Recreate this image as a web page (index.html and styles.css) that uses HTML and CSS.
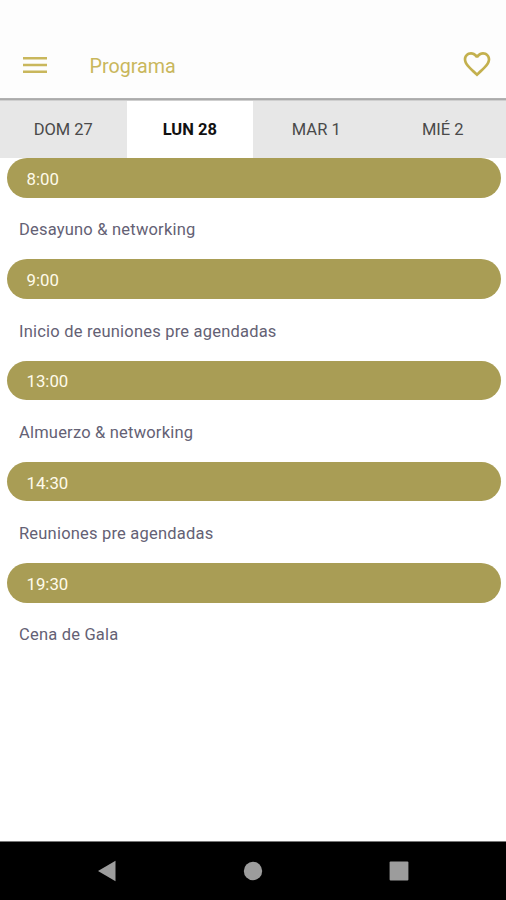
FILE: index.html
```html
<!DOCTYPE html>
<html lang="es">
<head>
    <meta charset="UTF-8">
    <meta name="viewport" content="width=device-width, initial-scale=1.0">
    <title>Programa</title>
    <link rel="stylesheet" href="styles.css">
</head>
<body>
    <header class="topbar">
        <svg class="menu-icon" viewBox="0 0 24 18">
            <path d="M0 1h24v2.4H0zM0 7.8h24v2.4H0zM0 14.6h24V17H0z"/>
        </svg>
        <h1 class="title">Programa</h1>
        <svg class="heart-icon" viewBox="0 0 24 24">
            <path d="M16.5 3c-1.74 0-3.41.81-4.5 2.09C10.91 3.81 9.24 3 7.5 3 4.42 3 2 5.42 2 8.5c0 3.78 3.4 6.86 8.55 11.54L12 21.35l1.45-1.32C18.6 15.36 22 12.28 22 8.5 22 5.42 19.58 3 16.5 3zm-4.4 15.55l-.1.1-.1-.1C7.14 14.24 4 11.39 4 8.5 4 6.5 5.5 5 7.5 5c1.54 0 3.04.99 3.57 2.36h1.87C13.46 5.99 14.96 5 16.5 5c2 0 3.5 1.5 3.5 3.5 0 2.89-3.14 5.74-7.9 10.05z"/>
        </svg>
    </header>

    <nav class="days">
        <div class="day">DOM 27</div>
        <div class="day active">LUN 28</div>
        <div class="day">MAR 1</div>
        <div class="day">MIÉ 2</div>
    </nav>

    <main class="schedule">
        <div class="hour">8:00</div>
        <p class="event">Desayuno &amp; networking</p>
        <div class="hour">9:00</div>
        <p class="event">Inicio de reuniones pre agendadas</p>
        <div class="hour">13:00</div>
        <p class="event">Almuerzo &amp; networking</p>
        <div class="hour">14:30</div>
        <p class="event">Reuniones pre agendadas</p>
        <div class="hour">19:30</div>
        <p class="event">Cena de Gala</p>
    </main>

    <footer class="navbar">
        <svg class="nav-icon" viewBox="0 0 22 22"><path d="M2 11L19.5 .8v20.4z"/></svg>
        <svg class="nav-icon" viewBox="0 0 22 22"><circle cx="11" cy="11" r="9.2"/></svg>
        <svg class="nav-icon" viewBox="0 0 22 22"><rect x="1.6" y="1.6" width="18.8" height="18.8" rx="1"/></svg>
    </footer>
</body>
</html>
```

FILE: styles.css
```css
* {
    box-sizing: border-box;
}

body {
    margin: 0;
    height: 900px;
    display: flex;
    flex-direction: column;
    overflow: hidden;
    background-color: #fff;
    font-family: Roboto, sans-serif;
}

/* header, the top 31px are the status bar */
.topbar {
    height: 101px;
    padding: 31px 13px 0 23px;
    display: flex;
    align-items: center;
    background: linear-gradient(#fdfdfd 98px, #b4b4b4 98px, #a8a8a8 100px, #cfcfcf 100px);
}

.menu-icon {
    width: 24px;
    height: 18px;
    margin-top: -2px;
    fill: #c9b75c;
}

.title {
    flex: 1;
    margin: 0 0 0 42.5px;
    font-size: 19.7px;
    font-weight: 400;
    color: #c9b75c;
}

.heart-icon {
    width: 32px;
    height: 32px;
    margin-top: -5px;
    fill: #c3b04e;
}

.days {
    display: flex;
    height: 57px;
}

.day {
    flex: 1;
    display: flex;
    align-items: center;
    justify-content: center;
    background-color: #e7e7e7;
    color: #4a4a4a;
    font-size: 16.5px;
}

.day.active {
    background-color: #fff;
    color: #111;
    font-weight: 700;
}

.schedule {
    flex: 1;
    padding: 0 5.5px 0 7px;
}

.hour {
    height: 39.5px;
    padding: 2px 0 0 19.5px;
    display: flex;
    align-items: center;
    border-radius: 20px;
    background-color: #a99d55;
    color: #fffbea;
    font-size: 16.8px;
}

.event {
    height: 61.75px;
    margin: 0;
    padding: 3px 0 0 12px;
    display: flex;
    align-items: center;
    color: #646174;
    font-size: 16.5px;
    letter-spacing: 0.2px;
}

.navbar {
    height: 59px;
    display: flex;
    align-items: center;
    justify-content: center;
    gap: 124px;
    background-color: #000;
    border-top: 1px solid #777;
}

.nav-icon {
    width: 22px;
    height: 22px;
    fill: #9c9c9c;
}
```
